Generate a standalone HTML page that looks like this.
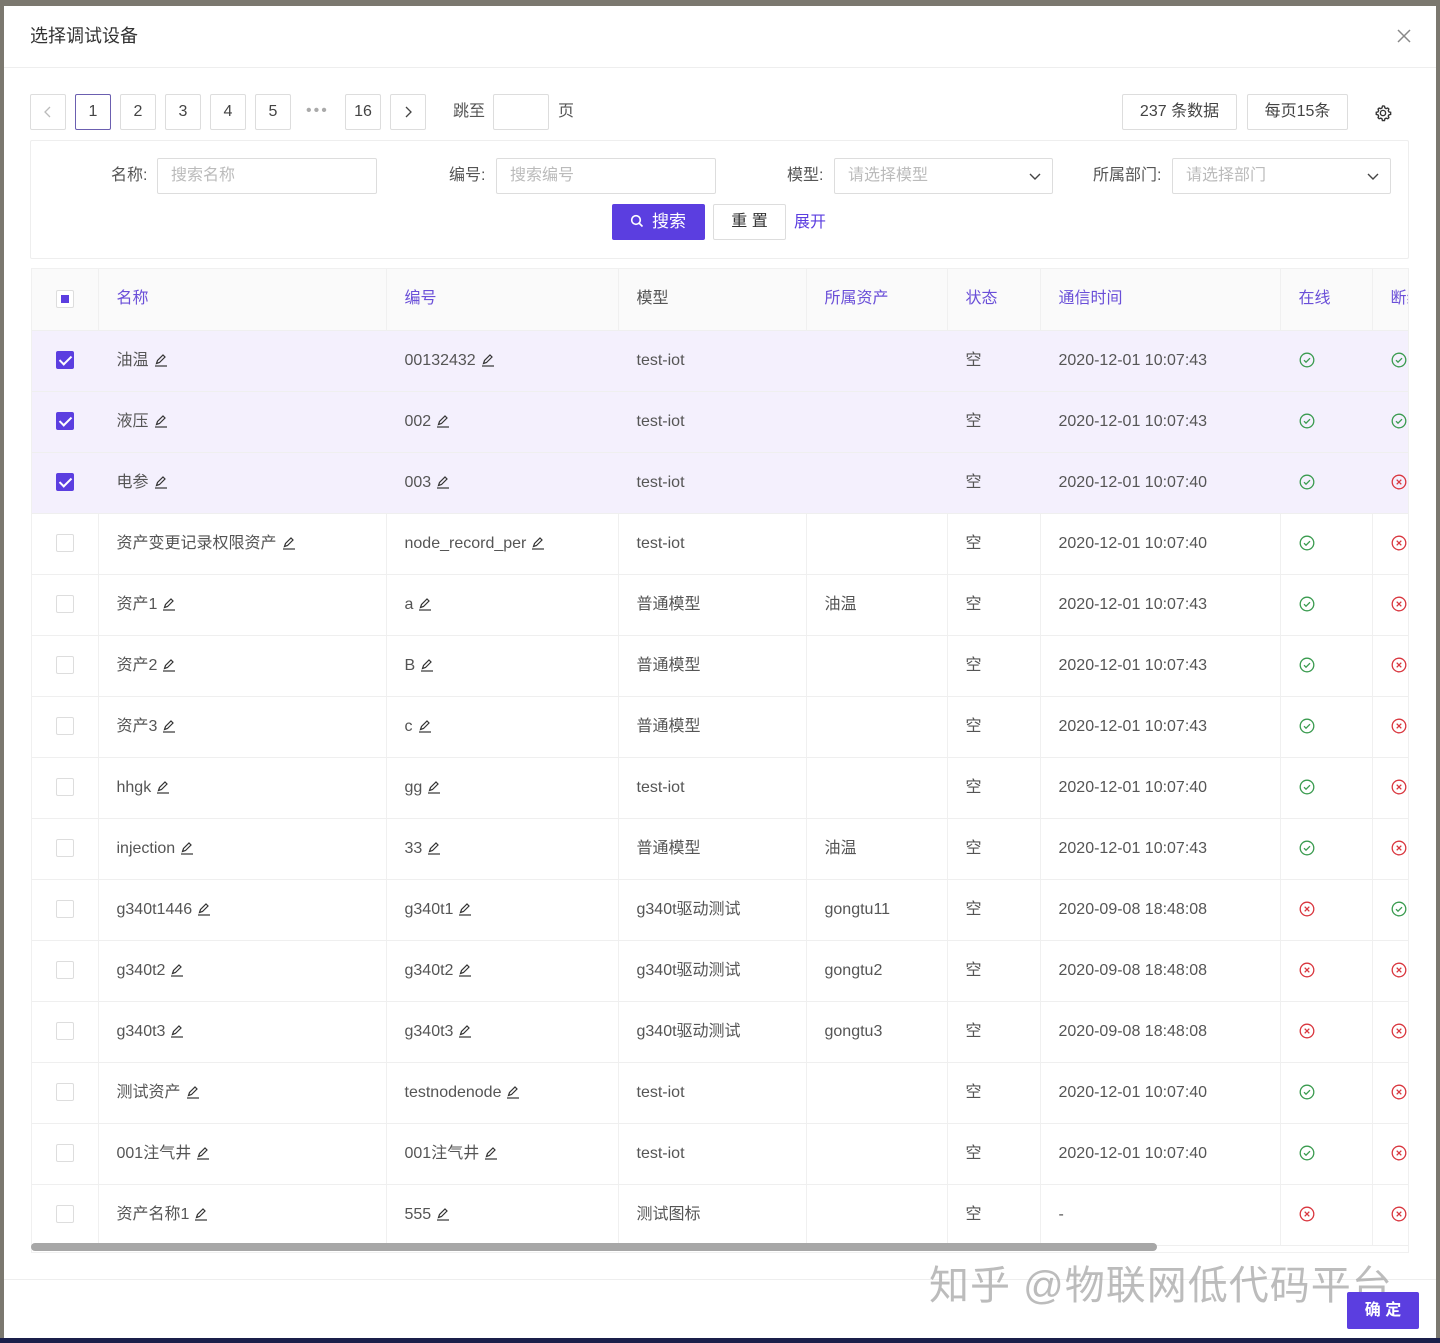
<!DOCTYPE html>
<html><head><meta charset="utf-8">
<style>
*{box-sizing:border-box;margin:0;padding:0}
body{width:1440px;height:1343px;background:#7b786f;font-family:"Liberation Sans","Noto Sans CJK SC",sans-serif;color:#555;font-size:16px;line-height:22px;position:relative;overflow:hidden}
.modal{position:absolute;left:4px;top:6px;width:1432px;height:1333px;background:#fff}
.bot{position:absolute;left:0;top:1338px;width:1440px;height:5px;background:#1a1f4a}
.abs{position:absolute}
.title{left:26px;top:19px;font-size:18px;color:#333}
.close{left:1392px;top:22px}
.hdiv{left:0;top:61px;width:1432px;height:1px;background:#eee}
.pg{position:absolute;top:88px;width:36px;height:36px;border:1px solid #ddd;border-radius:2px;text-align:center;line-height:34px;color:#444;font-size:16px}
.pg.act{border-color:#6b5fb0}
.box{position:absolute;border:1px solid #e3e3e3;border-radius:2px}
.inp{position:absolute;height:36px;border:1px solid #ddd;border-radius:2px;color:#bbb;padding-left:13px;line-height:34px;font-size:16px}
.lbl{position:absolute;font-size:16px;color:#555;line-height:22px}
.tbl{position:absolute;left:27px;top:262px;width:1378px;height:985px;overflow:hidden;border:1px solid #f0f0f0}
table{border-collapse:collapse;table-layout:fixed;width:1420px}
td,th{height:61px;border-bottom:1px solid #efefef;border-right:1px solid #f0f0f0;padding-left:18px;text-align:left;font-weight:normal;white-space:nowrap;overflow:hidden;font-size:16px;line-height:22px;vertical-align:middle}
th{background:#fafafa;color:#6a4fd8;height:61px}
th.k{color:#555}
td:first-child,th:first-child{padding-left:0;text-align:center}
tr.sel td{background:#f4f0fd;border-right-color:#f4f0fd}
.cb{display:inline-block;width:18px;height:18px;border:1px solid #ddd;border-radius:2px;vertical-align:middle;background:#fff}
.cb.on{background:#5b3ee0;border-color:#5b3ee0;position:relative}
.cb.on:after{content:"";position:absolute;left:5px;top:1px;width:5px;height:10px;border:solid #fff;border-width:0 2px 2px 0;transform:rotate(45deg)}
.cb.half{position:relative}
.cb.half:after{content:"";position:absolute;left:4px;top:4px;width:8px;height:8px;background:#5b3ee0}
.pen{display:inline-block;vertical-align:-2px;margin-left:5px}
.sb{position:absolute;left:27px;top:1237px;width:1126px;height:8px;border-radius:4px;background:#a7a7a7}
.fdiv{left:0;top:1273px;width:1432px;height:1px;background:#eee}
.ok{left:1343px;top:1286px;width:72px;height:37px;background:#5b3ee0;border-radius:2px;color:#fff;font-size:16px;text-align:center;line-height:37px;font-weight:bold}
.wm{left:925px;top:1252px;font-size:40px;line-height:56px;color:rgba(160,160,160,.7);letter-spacing:1px;white-space:nowrap}
</style></head><body>
<div class="modal">
<div class="abs title">选择调试设备</div>
<svg class="abs close" width="16" height="16" viewBox="0 0 16 16"><path d="M2 2L14 14M14 2L2 14" stroke="#888" stroke-width="1.5"/></svg>
<div class="abs hdiv"></div>

<div class="pg" style="left:26px"><svg width="10" height="12" viewBox="0 0 10 12" style="margin-top:11px"><path d="M7 1L2 6l5 5" stroke="#bbb" fill="none" stroke-width="1.3"/></svg></div>
<div class="pg act" style="left:71px">1</div>
<div class="pg" style="left:116px">2</div>
<div class="pg" style="left:161px">3</div>
<div class="pg" style="left:206px">4</div>
<div class="pg" style="left:251px">5</div>
<div class="abs" style="left:302px;top:94px;color:#aaa;letter-spacing:2px">•••</div>
<div class="pg" style="left:341px">16</div>
<div class="pg" style="left:386px"><svg width="10" height="12" viewBox="0 0 10 12" style="margin-top:11px"><path d="M3 1l5 5-5 5" stroke="#444" fill="none" stroke-width="1.3"/></svg></div>
<div class="lbl" style="left:449px;top:95px">跳至</div>
<div class="box" style="left:489px;top:88px;width:56px;height:36px;border-color:#ddd"></div>
<div class="lbl" style="left:554px;top:95px">页</div>
<div class="box" style="left:1118px;top:88px;width:115px;height:36px;border-color:#ddd;text-align:center;line-height:34px;color:#444">237 条数据</div>
<div class="box" style="left:1243px;top:88px;width:101px;height:36px;border-color:#ddd;text-align:center;line-height:34px;color:#444">每页15条</div>
<svg class="abs" style="left:1370px;top:98px" width="18" height="18" viewBox="0 0 24 24"><path d="M12 2.5l2 .4.5 2.3 1.6.9 2.2-.8 1.5 1.5-.8 2.2.9 1.6 2.3.5v2.8l-2.3.5-.9 1.6.8 2.2-1.5 1.5-2.2-.8-1.6.9-.5 2.3h-2.8l-.5-2.3-1.6-.9-2.2.8-1.5-1.5.8-2.2-.9-1.6-2.3-.5v-2.8l2.3-.5.9-1.6-.8-2.2 1.5-1.5 2.2.8 1.6-.9.5-2.3z" fill="none" stroke="#333" stroke-width="1.8"/><circle cx="12" cy="12" r="3.5" fill="none" stroke="#333" stroke-width="1.8"/></svg>

<div class="box" style="left:26px;top:134px;width:1379px;height:119px;border-color:#eee"></div>
<div class="lbl" style="left:107px;top:159px">名称:</div>
<div class="inp" style="left:153px;top:152px;width:220px">搜索名称</div>
<div class="lbl" style="left:445px;top:159px">编号:</div>
<div class="inp" style="left:492px;top:152px;width:220px">搜索编号</div>
<div class="lbl" style="left:783px;top:159px">模型:</div>
<div class="inp" style="left:830px;top:152px;width:219px">请选择模型<svg style="position:absolute;right:10px;top:13px" width="14" height="10" viewBox="0 0 14 10"><path d="M2 2l5 5 5-5" stroke="#444" fill="none" stroke-width="1.4"/></svg></div>
<div class="lbl" style="left:1089px;top:159px">所属部门:</div>
<div class="inp" style="left:1168px;top:152px;width:219px">请选择部门<svg style="position:absolute;right:10px;top:13px" width="14" height="10" viewBox="0 0 14 10"><path d="M2 2l5 5 5-5" stroke="#444" fill="none" stroke-width="1.4"/></svg></div>
<div class="abs" style="left:608px;top:198px;width:93px;height:36px;background:#5b3ee0;border-radius:2px;color:#fff;line-height:36px;font-size:17px;padding-left:18px"><svg width="14" height="14" viewBox="0 0 14 14" style="vertical-align:-1px;margin-right:8px"><circle cx="6" cy="6" r="4.3" fill="none" stroke="#fff" stroke-width="1.6"/><path d="M9 9l3.5 3.5" stroke="#fff" stroke-width="1.6"/></svg>搜索</div>
<div class="box" style="left:709px;top:198px;width:73px;height:36px;border-color:#ddd;text-align:center;line-height:34px;color:#333">重 置</div>
<div class="lbl" style="left:790px;top:206px;color:#5b3ee0">展开</div>

<div class="tbl"><table>
<colgroup><col style="width:66px"><col style="width:288px"><col style="width:232px"><col style="width:188px"><col style="width:141px"><col style="width:93px"><col style="width:240px"><col style="width:92px"><col style="width:80px"></colgroup>
<tr><th><span class="cb half"></span></th><th>名称</th><th>编号</th><th class="k">模型</th><th>所属资产</th><th>状态</th><th>通信时间</th><th>在线</th><th>断线</th></tr>
<tr class="sel"><td><span class="cb on"></span></td><td>油温<i class="pen P"></i></td><td>00132432<i class="pen P"></i></td><td>test-iot</td><td></td><td>空</td><td>2020-12-01 10:07:43</td><td class="G"></td><td class="G"></td></tr>
<tr class="sel"><td><span class="cb on"></span></td><td>液压<i class="pen P"></i></td><td>002<i class="pen P"></i></td><td>test-iot</td><td></td><td>空</td><td>2020-12-01 10:07:43</td><td class="G"></td><td class="G"></td></tr>
<tr class="sel"><td><span class="cb on"></span></td><td>电参<i class="pen P"></i></td><td>003<i class="pen P"></i></td><td>test-iot</td><td></td><td>空</td><td>2020-12-01 10:07:40</td><td class="G"></td><td class="R"></td></tr>
<tr><td><span class="cb"></span></td><td>资产变更记录权限资产<i class="pen P"></i></td><td>node_record_per<i class="pen P"></i></td><td>test-iot</td><td></td><td>空</td><td>2020-12-01 10:07:40</td><td class="G"></td><td class="R"></td></tr>
<tr><td><span class="cb"></span></td><td>资产1<i class="pen P"></i></td><td>a<i class="pen P"></i></td><td>普通模型</td><td>油温</td><td>空</td><td>2020-12-01 10:07:43</td><td class="G"></td><td class="R"></td></tr>
<tr><td><span class="cb"></span></td><td>资产2<i class="pen P"></i></td><td>B<i class="pen P"></i></td><td>普通模型</td><td></td><td>空</td><td>2020-12-01 10:07:43</td><td class="G"></td><td class="R"></td></tr>
<tr><td><span class="cb"></span></td><td>资产3<i class="pen P"></i></td><td>c<i class="pen P"></i></td><td>普通模型</td><td></td><td>空</td><td>2020-12-01 10:07:43</td><td class="G"></td><td class="R"></td></tr>
<tr><td><span class="cb"></span></td><td>hhgk<i class="pen P"></i></td><td>gg<i class="pen P"></i></td><td>test-iot</td><td></td><td>空</td><td>2020-12-01 10:07:40</td><td class="G"></td><td class="R"></td></tr>
<tr><td><span class="cb"></span></td><td>injection<i class="pen P"></i></td><td>33<i class="pen P"></i></td><td>普通模型</td><td>油温</td><td>空</td><td>2020-12-01 10:07:43</td><td class="G"></td><td class="R"></td></tr>
<tr><td><span class="cb"></span></td><td>g340t1446<i class="pen P"></i></td><td>g340t1<i class="pen P"></i></td><td>g340t驱动测试</td><td>gongtu11</td><td>空</td><td>2020-09-08 18:48:08</td><td class="R"></td><td class="G"></td></tr>
<tr><td><span class="cb"></span></td><td>g340t2<i class="pen P"></i></td><td>g340t2<i class="pen P"></i></td><td>g340t驱动测试</td><td>gongtu2</td><td>空</td><td>2020-09-08 18:48:08</td><td class="R"></td><td class="R"></td></tr>
<tr><td><span class="cb"></span></td><td>g340t3<i class="pen P"></i></td><td>g340t3<i class="pen P"></i></td><td>g340t驱动测试</td><td>gongtu3</td><td>空</td><td>2020-09-08 18:48:08</td><td class="R"></td><td class="R"></td></tr>
<tr><td><span class="cb"></span></td><td>测试资产<i class="pen P"></i></td><td>testnodenode<i class="pen P"></i></td><td>test-iot</td><td></td><td>空</td><td>2020-12-01 10:07:40</td><td class="G"></td><td class="R"></td></tr>
<tr><td><span class="cb"></span></td><td>001注气井<i class="pen P"></i></td><td>001注气井<i class="pen P"></i></td><td>test-iot</td><td></td><td>空</td><td>2020-12-01 10:07:40</td><td class="G"></td><td class="R"></td></tr>
<tr><td><span class="cb"></span></td><td>资产名称1<i class="pen P"></i></td><td>555<i class="pen P"></i></td><td>测试图标</td><td></td><td>空</td><td>-</td><td class="R"></td><td class="R"></td></tr>
</table></div>
<div class="sb"></div>
<div class="abs fdiv"></div>
<div class="abs wm">知乎 @物联网低代码平台</div>
<div class="abs ok">确 定</div>
</div>
<div class="bot"></div>
<svg width="0" height="0" style="position:absolute">
<defs>
<symbol id="pen" viewBox="0 0 14 14"><path d="M2.5 10.5l1-3 5.5-5.5 2 2-5.5 5.5z" fill="none" stroke="#333" stroke-width="1.2"/><path d="M1 13h12" stroke="#333" stroke-width="1.2"/></symbol>
<symbol id="ok" viewBox="0 0 16 16"><circle cx="8" cy="8" r="6.8" fill="none" stroke="#3a9b4f" stroke-width="1.3"/><path d="M5 8.2l2 2 4-4" fill="none" stroke="#3a9b4f" stroke-width="1.3"/></symbol>
<symbol id="no" viewBox="0 0 16 16"><circle cx="8" cy="8" r="6.8" fill="none" stroke="#d9363e" stroke-width="1.3"/><path d="M5.7 5.7l4.6 4.6M10.3 5.7l-4.6 4.6" stroke="#d9363e" stroke-width="1.3"/></symbol>
</defs></svg>
<script>
document.querySelectorAll('i.pen').forEach(function(e){e.outerHTML='<svg class="pen" width="14" height="14"><use href="#pen"/></svg>';});
document.querySelectorAll('td.G').forEach(function(e){e.innerHTML='<svg width="16" height="16" style="vertical-align:middle"><use href="#ok"/></svg>';});
document.querySelectorAll('td.R').forEach(function(e){e.innerHTML='<svg width="16" height="16" style="vertical-align:middle"><use href="#no"/></svg>';});
</script>
</body></html>
